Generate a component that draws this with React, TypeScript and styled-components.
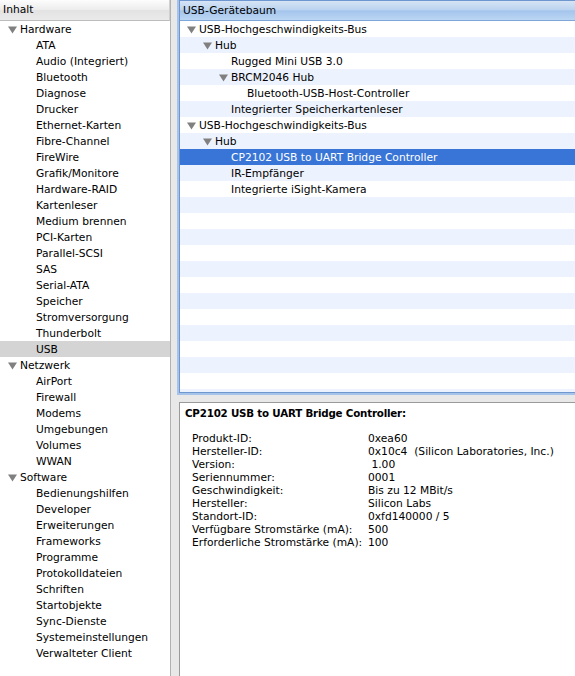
import React from "react";
import styled, { createGlobalStyle } from "styled-components";

const Global = createGlobalStyle`
  html, body { margin: 0; padding: 0; background: #e8e8e8; }
  body { font-family: "DejaVu Sans", "Liberation Sans", sans-serif; font-size: 10.7px; color: #000; }
  * { box-sizing: border-box; }
`;

const Window = styled.div`
  display: flex;
  width: 575px;
  height: 676px;
  overflow: hidden;
  background: #e8e8e8;
`;

const Sidebar = styled.div`
  flex: 0 0 171px;
  display: flex;
  flex-direction: column;
  background: #fff;
  border-right: 1px solid #b2b2b2;
`;

const SideHeader = styled.div`
  height: 21px;
  line-height: 20px;
  padding-left: 3px;
  background: linear-gradient(#fdfdfd, #ececec 50%, #e3e3e3 51%, #eaeaea);
  border-bottom: 1px solid #bcbcbc;
  border-right: 1px solid #d0d0d0;
`;

const Main = styled.div`
  flex: 0 0 402px;
  margin-left: 6px;
  display: flex;
  flex-direction: column;
  gap: 7px;
`;

const TreePanel = styled.div`
  height: 395px;
  border: 2px solid #a6c3ea;
  border-top-width: 0;
  display: flex;
`;

const TreeInner = styled.div`
  flex: 1;
  display: flex;
  flex-direction: column;
  border: 1px solid #6f97cf;
  background: repeating-linear-gradient(#fff 0 16px, #edf3fe 16px 32px);
  background-position: 0 20px;
`;

const TreeHeader = styled.div`
  height: 20px;
  line-height: 19px;
  padding-left: 3px;
  background: linear-gradient(#d6e4f5, #bcd4f0 45%, #a4c5ec 52%, #bcd6f4);
  border-bottom: 1px solid #7ea6d8;
`;

const Row = styled.div<{ $level: number; $indent: number; $selected?: boolean; $inactive?: boolean }>`
  display: flex;
  align-items: flex-start;
  height: 16px;
  white-space: nowrap;
  padding-left: ${(p) => p.$level * 16 + p.$indent}px;
  background: ${(p) => (p.$selected ? (p.$inactive ? "#d4d4d4" : "#3875d7") : "transparent")};
  color: ${(p) => (p.$selected && !p.$inactive ? "#fff" : "#000")};
`;

const Label = styled.span`
  line-height: 16px;
  margin-top: 1px;
`;

const Disclosure = styled.span`
  flex: 0 0 13px;
  height: 16px;
  display: flex;
  align-items: center;
  padding: 1px 0 0 1px;
`;

const List = styled.div`
  display: flex;
  flex-direction: column;
`;

const Details = styled.div`
  flex: 1;
  margin-left: 2px;
  background: #fff;
  border-top: 1px solid #9a9a9a;
  border-left: 1px solid #9a9a9a;
  padding: 3px 0 0 5px;
  line-height: 13px;
`;

const Title = styled.div`
  font-weight: bold;
  font-size: 10.3px;
  letter-spacing: -0.2px;
  height: 26px;
  line-height: 14px;
`;

const Grid = styled.div`
  display: grid;
  grid-template-columns: 176px auto;
  padding-left: 7px;
  white-space: pre;
`;

const Tri = () => (
  <svg width="9" height="8" viewBox="0 0 9 8">
    <polygon points="0,0.5 9,0.5 4.5,7.5" fill="#808080" />
  </svg>
);

type Node = { label: string; level: number; open?: boolean; selected?: boolean };

const sidebar: Node[] = [
  { label: "Hardware", level: 0, open: true },
  ...[
    "ATA", "Audio (Integriert)", "Bluetooth", "Diagnose", "Drucker", "Ethernet-Karten",
    "Fibre-Channel", "FireWire", "Grafik/Monitore", "Hardware-RAID", "Kartenleser",
    "Medium brennen", "PCI-Karten", "Parallel-SCSI", "SAS", "Serial-ATA", "Speicher",
    "Stromversorgung", "Thunderbolt",
  ].map((l) => ({ label: l, level: 1 })),
  { label: "USB", level: 1, selected: true },
  { label: "Netzwerk", level: 0, open: true },
  ...["AirPort", "Firewall", "Modems", "Umgebungen", "Volumes", "WWAN"].map((l) => ({ label: l, level: 1 })),
  { label: "Software", level: 0, open: true },
  ...[
    "Bedienungshilfen", "Developer", "Erweiterungen", "Frameworks", "Programme",
    "Protokolldateien", "Schriften", "Startobjekte", "Sync-Dienste",
    "Systemeinstellungen", "Verwalteter Client",
  ].map((l) => ({ label: l, level: 1 })),
];

const tree: Node[] = [
  { label: "USB-Hochgeschwindigkeits-Bus", level: 0, open: true },
  { label: "Hub", level: 1, open: true },
  { label: "Rugged Mini USB 3.0", level: 2 },
  { label: "BRCM2046 Hub", level: 2, open: true },
  { label: "Bluetooth-USB-Host-Controller", level: 3 },
  { label: "Integrierter Speicherkartenleser", level: 2 },
  { label: "USB-Hochgeschwindigkeits-Bus", level: 0, open: true },
  { label: "Hub", level: 1, open: true },
  { label: "CP2102 USB to UART Bridge Controller", level: 2, selected: true },
  { label: "IR-Empfänger", level: 2 },
  { label: "Integrierte iSight-Kamera", level: 2 },
];

const details: [string, string][] = [
  ["Produkt-ID:", "0xea60"],
  ["Hersteller-ID:", "0x10c4  (Silicon Laboratories, Inc.)"],
  ["Version:", " 1.00"],
  ["Seriennummer:", "0001"],
  ["Geschwindigkeit:", "Bis zu 12 MBit/s"],
  ["Hersteller:", "Silicon Labs"],
  ["Standort-ID:", "0xfd140000 / 5"],
  ["Verfügbare Stromstärke (mA):", "500"],
  ["Erforderliche Stromstärke (mA):", "100"],
];

const TreeRows = ({ nodes, indent, inactive }: { nodes: Node[]; indent: number; inactive?: boolean }) => (
  <List>
    {nodes.map((n, i) => (
      <Row key={i} $level={n.level} $indent={indent} $selected={n.selected} $inactive={inactive}>
        <Disclosure>{n.open ? <Tri /> : null}</Disclosure>
        <Label>{n.label}</Label>
      </Row>
    ))}
  </List>
);

export default function App() {
  return (
    <>
      <Global />
      <Window>
        <Sidebar>
          <SideHeader>Inhalt</SideHeader>
          <TreeRows nodes={sidebar} indent={7} inactive />
        </Sidebar>
        <Main>
          <TreePanel>
            <TreeInner>
              <TreeHeader>USB-Gerätebaum</TreeHeader>
              <TreeRows nodes={tree} indent={6} />
            </TreeInner>
          </TreePanel>
          <Details>
            <Title>CP2102 USB to UART Bridge Controller:</Title>
            <Grid>
              {details.map(([k, v]) => (
                <React.Fragment key={k}>
                  <span>{k}</span>
                  <span>{v}</span>
                </React.Fragment>
              ))}
            </Grid>
          </Details>
        </Main>
      </Window>
    </>
  );
}
